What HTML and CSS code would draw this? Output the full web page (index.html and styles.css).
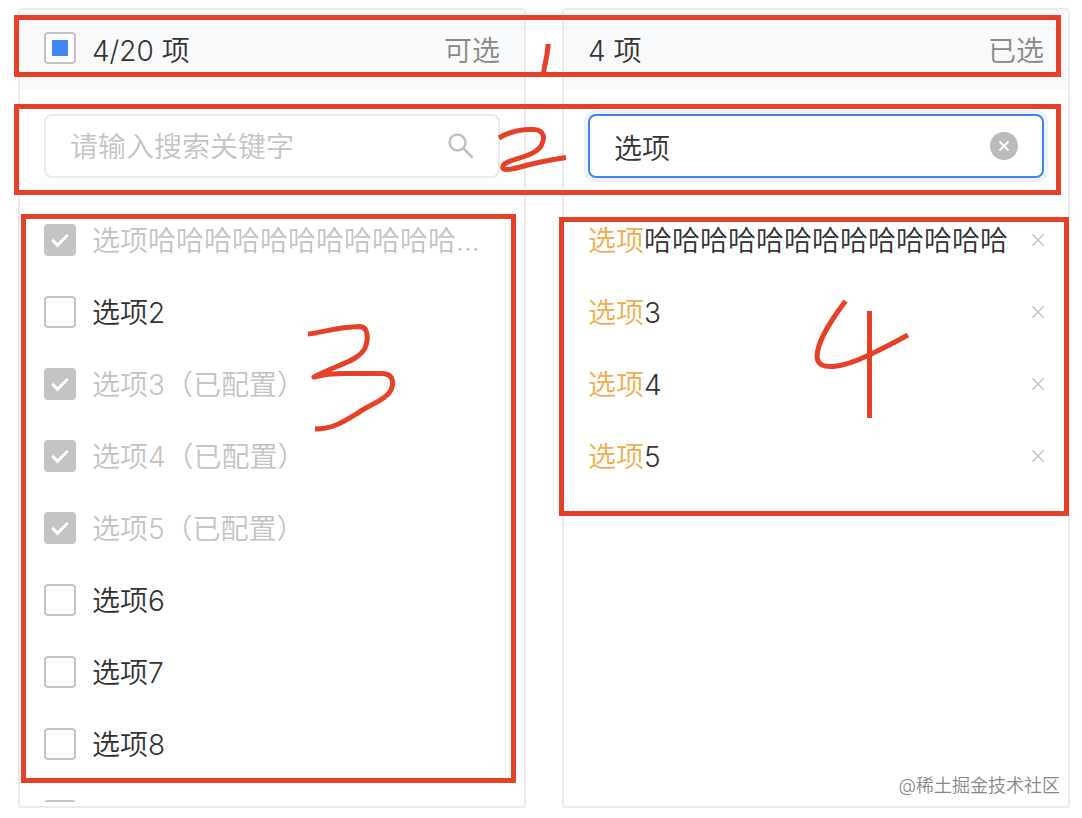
FILE: index.html
```html
<!DOCTYPE html>
<html lang="zh-CN">
<head>
  <meta charset="UTF-8" />
  <meta name="viewport" content="width=device-width, initial-scale=1.0">
  <title>穿梭框</title>
  <link rel="stylesheet" href="styles.css">
</head>
<body>

  <main class="transfer">
    <section class="panel">
      <header class="panel-header">
        <label class="check-all">
          <input type="checkbox" class="checkbox mixed">
          <span>4/20 项</span>
        </label>
        <span class="panel-title">可选</span>
      </header>

      <div class="search">
        <input type="text" class="search-input" placeholder="请输入搜索关键字" aria-label="搜索可选项">
        <svg class="search-icon" viewBox="0 0 26 26" aria-hidden="true">
          <circle cx="9.500" cy="9.500" r="8" />
          <path d="M15 15 L24.500 24.500" />
        </svg>
      </div>

      <ul class="list">
        <li><label class="option disabled"><input type="checkbox" class="checkbox" checked disabled><span class="text">选项哈哈哈哈哈哈哈哈哈哈哈哈哈（已配置）</span></label></li>
        <li><label class="option"><input type="checkbox" class="checkbox"><span class="text">选项2</span></label></li>
        <li><label class="option disabled"><input type="checkbox" class="checkbox" checked disabled><span class="text">选项3（已配置）</span></label></li>
        <li><label class="option disabled"><input type="checkbox" class="checkbox" checked disabled><span class="text">选项4（已配置）</span></label></li>
        <li><label class="option disabled"><input type="checkbox" class="checkbox" checked disabled><span class="text">选项5（已配置）</span></label></li>
        <li><label class="option"><input type="checkbox" class="checkbox"><span class="text">选项6</span></label></li>
        <li><label class="option"><input type="checkbox" class="checkbox"><span class="text">选项7</span></label></li>
        <li><label class="option"><input type="checkbox" class="checkbox"><span class="text">选项8</span></label></li>
        <li><label class="option"><input type="checkbox" class="checkbox" aria-label="下一项"></label></li>
      </ul>
    </section>

    <section class="panel">
      <header class="panel-header">
        <span>4 项</span>
        <span class="panel-title">已选</span>
      </header>

      <div class="search active">
        <input type="text" class="search-input" value="选项" aria-label="搜索已选项">
        <button type="button" class="clear" aria-label="清空">
          <svg viewBox="0 0 28 28" aria-hidden="true"><path d="M9.500 9.500 L18.500 18.500 M18.500 9.500 L9.500 18.500" /></svg>
        </button>
      </div>

      <ul class="list">
        <li class="option"><span class="text"><em>选项</em>哈哈哈哈哈哈哈哈哈哈哈哈哈</span><button type="button" class="remove" aria-label="移除"><svg viewBox="0 0 14 14" aria-hidden="true"><path d="M2.500 1.500 L13.500 12.500 M13.500 1.500 L2.500 12.500" /></svg></button></li>
        <li class="option"><span class="text"><em>选项</em>3</span><button type="button" class="remove" aria-label="移除"><svg viewBox="0 0 14 14" aria-hidden="true"><path d="M2.500 1.500 L13.500 12.500 M13.500 1.500 L2.500 12.500" /></svg></button></li>
        <li class="option"><span class="text"><em>选项</em>4</span><button type="button" class="remove" aria-label="移除"><svg viewBox="0 0 14 14" aria-hidden="true"><path d="M2.500 1.500 L13.500 12.500 M13.500 1.500 L2.500 12.500" /></svg></button></li>
        <li class="option"><span class="text"><em>选项</em>5</span><button type="button" class="remove" aria-label="移除"><svg viewBox="0 0 14 14" aria-hidden="true"><path d="M2.500 1.500 L13.500 12.500 M13.500 1.500 L2.500 12.500" /></svg></button></li>
      </ul>
    </section>
  </main>

  <!-- red pen marks over the two panels -->
  <svg class="marks" width="1082" height="818" viewBox="0 0 1082 818" aria-hidden="true">
    <rect x="16.5" y="17.5" width="1042" height="57" />
    <rect x="16.5" y="106.5" width="1042" height="86" />
    <rect x="23.5" y="216.5" width="490" height="564" />
    <rect x="561.5" y="219.5" width="505" height="294" />
    <path d="M548 44 C548 54 545 62 543.500 73" />
    <path d="M499 138 C512 130 525 129 534 129.500 C545 130 545 139 541 146 C534 158 505 159 503 166 C501 172 513 169 524 166 C538 162 550 160 566 157.500" />
    <path d="M308 334 C322 333 335 327 360 326.500 C368 327 369 338 365 348 C359 361 336 365 314 377 C325 374 332 373.500 345 373.500 L383 373.500 C394 374 395 385 389 393 C382 402 370 404 358 413 C345 421 333 429 315 429" />
    <path d="M845.500 301 C826 327 817 344 817 357 C818 372 842 368 869 355 C884 348 897 341 908 335 M869.500 311 V418" />
  </svg>

  <div class="watermark">@稀土掘金技术社区</div>

</body>
</html>
```
FILE: styles.css
```css
*,
*::after {
  box-sizing: border-box;
}

body {
  margin: 0;
  font-family: Inter, "Noto Sans CJK SC", sans-serif;
  font-size: 28px;
  font-weight: 350;
  line-height: 40px;
  color: #333;
  background-color: #fff;
}

.transfer {
  display: flex;
  gap: 36px;
  height: 100vh;
  padding: 8px 12px 10px 18px;
}

.panel {
  flex: 1;
  min-width: 0;
  display: flex;
  flex-direction: column;
  padding-bottom: 4px;
  border: 2px solid #ebebeb;
  border-radius: 4px;
}

.panel-header {
  display: flex;
  align-items: center;
  justify-content: space-between;
  flex: none;
  height: 80px;
  padding: 0 24px;
  background-color: #f7f9fa;
}

.panel-header .checkbox {
  margin-top: -4px;
}

.panel-header span {
  padding-top: 2px;
}

.panel-title {
  color: #888;
}

.check-all {
  display: flex;
  align-items: center;
  gap: 16px;
}

/* checkbox */
.checkbox {
  appearance: none;
  flex: none;
  display: grid;
  place-content: center;
  width: 32px;
  height: 32px;
  margin: 0;
  border: 2px solid #c4c4c4;
  border-radius: 4px;
  background-color: #fff;
}

.checkbox:checked {
  background-color: #c4c4c4;
}

.checkbox:checked::after {
  content: "";
  width: 16px;
  height: 9px;
  margin-bottom: 4px;
  border: solid #fff;
  border-width: 0 0 3px 3px;
  transform: rotate(-45deg);
}

.checkbox.mixed::after {
  content: "";
  width: 16px;
  height: 16px;
  background-color: #4086f5;
}

/* search */
.search {
  display: flex;
  align-items: center;
  flex: none;
  height: 64px;
  margin: 24px 24px 26px;
  padding: 0 24px;
  border: 2px solid #ebebeb;
  border-radius: 8px;
}

.search.active {
  border-color: #4285e8;
  box-shadow: 0 0 0 4px #eaf2fe;
}

.search-input {
  flex: 1;
  min-width: 0;
  height: 42px;
  padding: 2px 0 0;
  border: 0;
  outline: 0;
  font: inherit;
  color: inherit;
  background: none;
}

.search-input::placeholder {
  color: #c4c4c4;
}

.search-icon {
  width: 26px;
  height: 26px;
  fill: none;
  stroke: #c0c0c0;
  stroke-width: 2.5;
}

.clear {
  width: 28px;
  height: 28px;
  padding: 0;
  border: 0;
  border-radius: 50%;
  background-color: #bbb;
}

.clear svg {
  display: block;
  stroke: #fff;
  stroke-width: 2;
}

/* options */
.list {
  flex: 1;
  min-height: 0;
  margin: 0;
  padding: 0 24px;
  list-style: none;
  overflow: hidden;
}

.option {
  display: flex;
  align-items: center;
  gap: 16px;
  height: 72px;
}

.option.disabled {
  color: #c4c4c4;
}

.text {
  flex: 1;
  min-width: 0;
  padding-top: 2px;
  overflow: hidden;
  white-space: nowrap;
  text-overflow: ellipsis;
}

.text em {
  font-style: normal;
  color: #f0ad4e;
}

.remove {
  flex: none;
  width: 14px;
  height: 14px;
  padding: 0;
  border: 0;
  background: none;
}

.remove svg {
  display: block;
  stroke: #c4c4c4;
  stroke-width: 1.5;
}

.marks {
  position: absolute;
  top: 0;
  left: 0;
  fill: none;
  stroke: #e54128;
  stroke-width: 5;
  stroke-linejoin: miter;
  pointer-events: none;
}

.marks path {
  stroke-linejoin: round;
}

.watermark {
  position: absolute;
  right: 22px;
  bottom: 20px;
  font-size: 18px;
  line-height: 24px;
  color: #888;
  text-shadow: 1px 1px 0 #fff;
}
```
